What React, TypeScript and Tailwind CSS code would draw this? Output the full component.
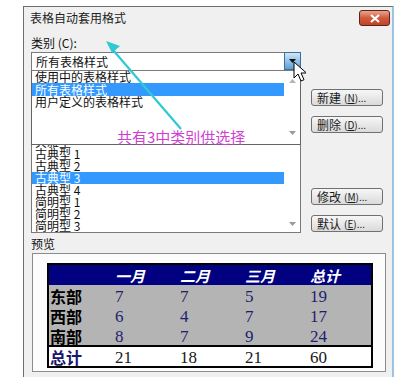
import React from "react";

/* Word 2007 — 表格自动套用格式 dialog, with the 类别 dropdown open and an
   annotation drawn over it. */

const ui = "font-['Noto_Sans_CJK_SC',sans-serif]";
const serif = "font-['Liberation_Serif','Noto_Sans_CJK_SC',serif]";

// rows above 典雅型 sit wholly under the open dropdown, so they are left blank
const styles = ["", "", "", "", "", "典雅型", "古典型 1", "古典型 2", "古典型 3", "古典型 4", "简明型 1", "简明型 2", "简明型 3"];

const rows = [
  { name: "东部", v: ["7", "7", "5", "19"] },
  { name: "西部", v: ["6", "4", "7", "17"] },
  { name: "南部", v: ["8", "7", "9", "24"] },
];

function DlgButton({ label, k }: { label: string; k: string }) {
  return (
    <button
      type="button"
      className={`flex h-[17px] w-[72px] items-center rounded-[3px] border border-[#707070] bg-gradient-to-b from-[#f7f7f7] to-[#dadada] pl-[5px] text-[12px] leading-none text-[#1a1a1a] ${ui}`}
    >
      {label}
      <span className="ml-[3px] text-[10px]">
        (<u>{k}</u>)...
      </span>
    </button>
  );
}

function ArrowDown() {
  return (
    <svg width="7" height="4" viewBox="0 0 7 4">
      <path d="M0 0h7L3.5 4z" fill="#9a9a9a" />
    </svg>
  );
}

function ArrowUp() {
  return (
    <svg width="7" height="4" viewBox="0 0 7 4">
      <path d="M0 4h7L3.5 0z" fill="#b4b4b4" />
    </svg>
  );
}

export default function App() {
  const cols = "grid grid-cols-[63px_65px_65px_65px_64px]";
  return (
    <div className="relative h-[377px] w-[399px] overflow-hidden bg-white pl-[23px] pt-[6px]">
      <div className="h-[380px] w-[371px] border-l border-t border-r-2 border-[#6e6e6e] border-r-[#9cc3e5] bg-[#f0f0f0]">
        {/* title bar */}
        <div className="flex h-[22px] items-center justify-between pl-[6px] pr-[2px]">
          <span className={`text-[12px] leading-none text-[#222] ${ui}`}>表格自动套用格式</span>
          <span className="flex h-[16px] w-[31px] items-center justify-center rounded-[3px] border border-[#5b2418] bg-gradient-to-b from-[#e9a58e] via-[#cf5a3e] to-[#c0432a]">
            <svg width="10" height="9" viewBox="0 0 10 9">
              <path d="M1 1l8 7M9 1L1 8" stroke="#fff" strokeWidth="2.2" />
            </svg>
          </span>
        </div>

        <div className="pl-[7px]">
          <p className={`mt-[7px] text-[12px] leading-[14px] text-[#111] ${ui}`}>类别 (C):</p>

          <div className="mt-[2px] flex">
            {/* left column: combo + style list */}
            <div className="relative w-[270px]">
              <div className="flex h-[19px] items-center justify-between border border-[#7a7a7a] bg-white">
                <span className={`pl-[4px] text-[12px] leading-none text-[#111] ${ui}`}>所有表格样式</span>
                <span className="-mr-px -mt-px flex h-[18px] w-[17px] items-center justify-center self-start border border-[#3c6f99] bg-gradient-to-b from-[#cfe6f8] to-[#5d9fd6]">
                  <svg width="7" height="4" viewBox="0 0 7 4">
                    <path d="M0 0h7L3.5 4z" fill="#111" />
                  </svg>
                </span>
              </div>

              <div className="flex h-[162px] border border-t-0 border-[#7a7a7a] bg-white">
                <ul className={`flex-1 overflow-hidden pt-[5px] text-[12px] ${ui}`}>
                  {styles.map((s, i) => (
                    <li
                      key={i}
                      className={`flex h-[12px] items-center pl-[3px] leading-none ${
                        s === "古典型 3" ? "bg-[#3399ff] text-white" : "text-[#111]"
                      }`}
                    >
                      {s}
                    </li>
                  ))}
                </ul>
                <div className="flex w-[16px] flex-col items-center justify-end pb-[6px]">
                  <ArrowDown />
                </div>
              </div>

              {/* open dropdown of the combo */}
              <div className="absolute left-0 top-[19px] flex h-[74px] w-[270px] border border-t-0 border-[#646464] bg-white">
                <ul className={`flex-1 text-[12px] ${ui}`}>
                  <li className="flex h-[12px] items-center pl-[3px] leading-none text-[#111]">使用中的表格样式</li>
                  <li className="flex h-[13px] items-center bg-[#3399ff] pl-[3px] leading-none text-white">所有表格样式</li>
                  <li className="flex h-[12px] items-center pl-[3px] leading-none text-[#111]">用户定义的表格样式</li>
                </ul>
                <div className="flex w-[16px] flex-col items-center justify-between pb-[9px] pt-[8px]">
                  <ArrowUp />
                  <ArrowDown />
                </div>
              </div>
            </div>

            {/* right column buttons */}
            <div className="ml-[10px] flex flex-col pt-[37px]">
              <DlgButton label="新建" k="N" />
              <div className="mt-[10px]">
                <DlgButton label="删除" k="D" />
              </div>
              <div className="mt-[55px]">
                <DlgButton label="修改" k="M" />
              </div>
              <div className="mt-[10px]">
                <DlgButton label="默认" k="E" />
              </div>
            </div>
          </div>

          <p className={`mt-[4px] text-[12px] leading-[14px] text-[#111] ${ui}`}>预览</p>

          {/* preview */}
          <div className="ml-px mt-[2px] h-[119px] w-[354px] border border-[#8c8c8c] bg-[#fcfcfc] pl-[14px] pt-[9px]">
            <div className="w-[326px] border-2 border-black">
              <div className={`${cols} h-[20px] items-center bg-[#000080] text-[15px] font-bold italic leading-none text-white ${ui}`}>
                <span />
                <span className="pl-[3px]">一月</span>
                <span className="pl-[3px]">二月</span>
                <span className="pl-[3px]">三月</span>
                <span className="pl-[3px]">总计</span>
              </div>
              <div className="bg-[#b4b4b4]">
                {rows.map((r) => (
                  <div key={r.name} className={`${cols} h-[20px] items-center`}>
                    <span className={`pl-[1px] pt-[2px] text-[16px] font-bold leading-none text-black ${ui}`}>{r.name}</span>
                    {r.v.map((n, i) => (
                      <span key={i} className={`pl-[3px] pt-[3px] text-[17px] leading-none text-[#1e1e6e] ${serif}`}>
                        {n}
                      </span>
                    ))}
                  </div>
                ))}
              </div>
              <div className={`${cols} h-[21px] items-center border-t-2 border-black bg-white`}>
                <span className={`pl-[1px] text-[16px] font-bold leading-none text-[#16166e] ${ui}`}>总计</span>
                {["21", "18", "21", "60"].map((n, i) => (
                  <span key={i} className={`pl-[3px] pt-[1px] text-[17px] leading-none text-[#1a1a1a] ${serif}`}>
                    {n}
                  </span>
                ))}
              </div>
            </div>
          </div>
        </div>
      </div>

      {/* annotation drawn over the screenshot */}
      <svg className="absolute left-0 top-0" width="399" height="377" viewBox="0 0 399 377">
        <path d="M181 129L113 50" stroke="#2fc9d2" strokeWidth="2.2" />
        <path d="M106 41l14 5-8 7z" fill="#2fc9d2" />
      </svg>
      <span className={`absolute left-[117px] top-[128px] text-[15px] leading-[18px] text-[#cf3fd0] ${ui}`}>
        共有3中类别供选择
      </span>

      {/* mouse pointer */}
      <svg className="absolute left-[293px] top-[61px]" width="13" height="21" viewBox="0 0 13 21">
        <path d="M1 1v16l4-4 3 7 3-1.3-3-6.7h5.5z" fill="#fff" stroke="#000" strokeWidth="1" strokeLinejoin="round" />
      </svg>
    </div>
  );
}
